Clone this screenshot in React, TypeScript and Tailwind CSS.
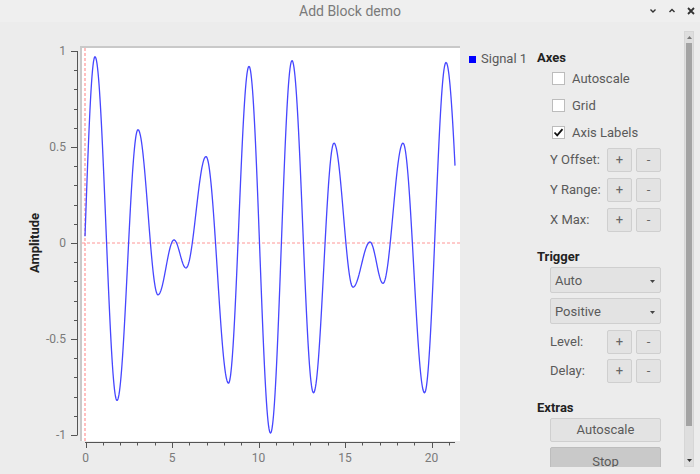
import React from 'react'

// extrema of the trace, in page pixels: [x, value]
const extrema: [number, number][] = [
  [75, -0.9], [95, 0.97], [117, -0.82], [138, 0.59], [158, -0.27], [174, 0.016],
  [186, -0.13], [206, 0.45], [228.5, -0.73], [249, 0.92], [270.5, -0.99], [292, 0.95],
  [313.5, -0.78], [334, 0.52], [353, -0.23], [370, 0.005], [383, -0.21], [403, 0.52],
  [424.5, -0.78], [446, 0.94], [470, -0.8],
]

const yOf = (v: number) => 243 - v * 192
const xOf = (t: number) => 85.5 + t * 17.3

function tracePath() {
  const pts: string[] = []
  let i = 0
  for (let x = 85; x <= 455; x += 0.5) {
    while (i < extrema.length - 2 && extrema[i + 1][0] <= x) i++
    const [x0, v0] = extrema[i]
    const [x1, v1] = extrema[i + 1]
    const f = (x - x0) / (x1 - x0)
    const v = v0 + ((v1 - v0) * (1 - Math.cos(Math.PI * f))) / 2
    pts.push(`${x.toFixed(1)},${yOf(v).toFixed(1)}`)
  }
  return 'M' + pts.join('L')
}

const Chart = () => {
  const yMinor = Array.from({ length: 21 }, (_, k) => 1 - k * 0.1)
  const xMinor = Array.from({ length: 22 }, (_, k) => k)
  return (
    <svg width={465} height={452} viewBox="0 22 465 452" className="shrink-0">
      <rect x={80} y={46} width={380} height={395} fill="#ffffff" />
      <line x1={80} y1={47} x2={460} y2={47} stroke="#c9c9c9" strokeWidth={2} />
      <line x1={81} y1={46} x2={81} y2={441} stroke="#c9c9c9" strokeWidth={2} />
      <line x1={82} y1={243} x2={460} y2={243} stroke="#ff9696" strokeDasharray="3 2" />
      <line x1={85} y1={48} x2={85} y2={441} stroke="#ff9696" strokeWidth={1.2} strokeDasharray="3 2" />
      <path d={tracePath()} fill="none" stroke="#4646ff" strokeWidth={1.3} strokeLinejoin="round" />

      {/* y axis */}
      <line x1={77.5} y1={51} x2={77.5} y2={435} stroke="#555" />
      {yMinor.map((v, k) => (
        <line key={k} x1={k % 5 === 0 ? 71 : 74} y1={Math.round(yOf(v)) + 0.5} x2={77.5} y2={Math.round(yOf(v)) + 0.5} stroke="#555" />
      ))}
      {[['1', 1], ['0.5', 0.5], ['0', 0], ['-0.5', -0.5], ['-1', -1]].map(([s, v]) => (
        <text key={s as string} x={66} y={yOf(v as number) + 4} textAnchor="end" fontSize={12} fill="#7a7a7a" fontFamily="Roboto, sans-serif">
          {s}
        </text>
      ))}
      <text transform="translate(39,243) rotate(-90)" textAnchor="middle" fontSize={13} fontWeight={700} fill="#222" fontFamily="Roboto, sans-serif">
        Amplitude
      </text>

      {/* x axis */}
      <line x1={85} y1={442.5} x2={455} y2={442.5} stroke="#555" />
      {xMinor.map((t) => (
        <line key={t} x1={Math.round(xOf(t)) + 0.5} y1={442.5} x2={Math.round(xOf(t)) + 0.5} y2={t % 5 === 0 ? 448 : 445.5} stroke="#555" />
      ))}
      {[0, 5, 10, 15, 20].map((t) => (
        <text key={t} x={xOf(t)} y={462} textAnchor="middle" fontSize={12} fill="#7a7a7a" fontFamily="Roboto, sans-serif">
          {t}
        </text>
      ))}
    </svg>
  )
}

const Check = ({ label, checked }: { label: string; checked?: boolean }) => (
  <div className="h-[27px] flex items-center pl-[22px] gap-[7px]">
    <div className="w-[13px] h-[13px] bg-white border border-[#bcbcbc] flex items-center justify-center">
      {checked && (
        <svg width={11} height={11} viewBox="0 0 11 11">
          <path d="M1.5 5.5 L4.2 8.3 L9.5 2.2" fill="none" stroke="#111" strokeWidth={1.8} />
        </svg>
      )}
    </div>
    <span className="text-[13px] text-[#5a5a5a]">{label}</span>
  </div>
)

const SmallBtn = ({ children }: { children: React.ReactNode }) => (
  <div className="w-[25px] h-full bg-[#e3e3e3] border border-[#cfcfcf] rounded-[2px] flex items-center justify-center text-[13px] text-[#666]">
    {children}
  </div>
)

const StepRow = ({ label, className }: { label: string; className: string }) => (
  <div className={`flex items-center pl-[20px] h-[24px] ${className}`}>
    <span className="w-[57px] text-[13px] text-[#5a5a5a]">{label}</span>
    <div className="flex gap-[4px] h-full">
      <SmallBtn>+</SmallBtn>
      <SmallBtn>-</SmallBtn>
    </div>
  </div>
)

const Combo = ({ label, className }: { label: string; className: string }) => (
  <div className={`ml-[20px] w-[111px] h-[26px] bg-[#e3e3e3] border border-[#cfcfcf] rounded-[2px] flex items-center justify-between pl-[4px] pr-[5px] ${className}`}>
    <span className="text-[13px] text-[#5a5a5a] pt-[1px]">{label}</span>
    <svg width={5} height={3} viewBox="0 0 5 3" className="mt-[3px]">
      <path d="M0 0 L5 0 L2.5 3 Z" fill="#444" />
    </svg>
  </div>
)

const Heading = ({ children, className }: { children: React.ReactNode; className: string }) => (
  <div className={`pl-[7px] text-[13px] leading-[16px] font-bold text-[#222] ${className}`}>{children}</div>
)

export default function App() {
  return (
    <div className="w-[700px] h-[474px] bg-[#ececec] overflow-hidden flex flex-col" style={{ fontFamily: 'Roboto, "Noto Sans", sans-serif' }}>
      <div className="h-[22px] shrink-0 bg-[#efefef] grid grid-cols-[1fr_auto_1fr] items-center">
        <div />
        <div className="text-[14px] text-[#7a7a7a]">Add Block demo</div>
        <div className="flex justify-end items-center gap-[11px] pr-[5px]">
          <svg width={8} height={8} viewBox="0 0 8 8">
            <path d="M1.5 2.5 L4 5 L6.5 2.5" fill="none" stroke="#333" strokeWidth={1.4} />
          </svg>
          <svg width={8} height={8} viewBox="0 0 8 8">
            <path d="M1.5 5 L4 2.5 L6.5 5" fill="none" stroke="#333" strokeWidth={1.4} />
          </svg>
          <svg width={8} height={8} viewBox="0 0 8 8">
            <path d="M1 1 L7 7 M7 1 L1 7" fill="none" stroke="#333" strokeWidth={1.8} />
          </svg>
        </div>
      </div>

      <div className="flex flex-1">
        <Chart />
        <div className="mt-[9px] h-[436px] flex">
          <div className="w-[65px] pt-[20px] pl-[4px] flex items-start gap-[5px]">
            <div className="w-[7px] h-[7px] bg-[#0000ff] mt-[5px]" />
            <span className="text-[13px] leading-[16px] text-[#5a5a5a]">Signal 1</span>
          </div>
          <div className="w-[154px] overflow-hidden">
            <Heading className="pt-[19px] h-[34px]">Axes</Heading>
            <Check label="Autoscale" />
            <Check label="Grid" />
            <Check label="Axis Labels" checked />
            <StepRow label="Y Offset:" className="mt-[2px]" />
            <StepRow label="Y Range:" className="mt-[6px]" />
            <StepRow label="X Max:" className="mt-[6px]" />
            <Heading className="mt-[17px]">Trigger</Heading>
            <Combo label="Auto" className="mt-[2px]" />
            <Combo label="Positive" className="mt-[5px]" />
            <StepRow label="Level:" className="mt-[6px]" />
            <StepRow label="Delay:" className="mt-[5px]" />
            <Heading className="mt-[17px]">Extras</Heading>
            <div className="ml-[20px] mt-[2px] w-[111px] h-[24px] bg-[#e3e3e3] border border-[#cfcfcf] rounded-[2px] flex items-center justify-center text-[13px] text-[#5a5a5a]">
              Autoscale
            </div>
            <div className="ml-[20px] mt-[5px] w-[111px] h-[26px] bg-[#c9c9c9] border border-[#bdbdbd] rounded-[2px] flex items-center justify-center text-[13px] text-[#5a5a5a] pt-[4px]">
              Stop
            </div>
          </div>
          <div className="w-[10px] h-full bg-[#dedede] border border-[#d6d6d6] flex flex-col">
            <div className="h-[11px] flex items-center justify-center">
              <svg width={5} height={3} viewBox="0 0 5 3">
                <path d="M0 3 L5 3 L2.5 0 Z" fill="#777" />
              </svg>
            </div>
            <div className="h-[383px] mx-[1px] bg-[#a3a3a3]" />
            <div className="flex-1" />
            <div className="h-[11px] flex items-center justify-center">
              <svg width={5} height={3} viewBox="0 0 5 3">
                <path d="M0 0 L5 0 L2.5 3 Z" fill="#333" />
              </svg>
            </div>
          </div>
        </div>
      </div>
    </div>
  )
}
